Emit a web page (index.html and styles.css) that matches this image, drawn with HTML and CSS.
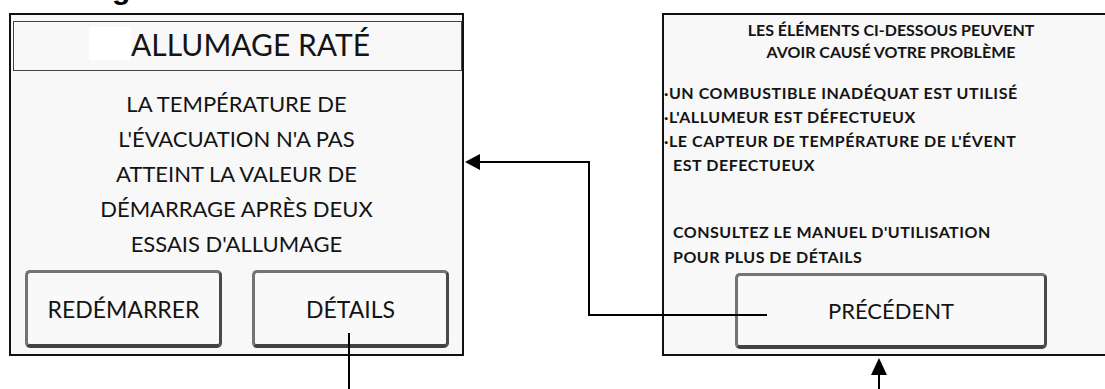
FILE: index.html
```html
<!DOCTYPE html>
<html lang="fr">
<head>
    <meta charset="UTF-8">
    <meta name="viewport" content="width=device-width, initial-scale=1.0">
    <title>Allumage raté</title>
    <link rel="stylesheet" href="styles.css">
</head>
<body>
    <div id="page-head">
        <div id="page-head-text">Allumage raté</div>
    </div>

    <div id="screens">
        <div class="screen" id="screen-error">
            <div id="error-title">
                <span id="title-blank"></span>
                <span>ALLUMAGE RATÉ</span>
            </div>

            <div id="error-text">
                LA TEMPÉRATURE DE<br>
                L'ÉVACUATION N'A PAS<br>
                ATTEINT LA VALEUR DE<br>
                DÉMARRAGE APRÈS DEUX<br>
                ESSAIS D'ALLUMAGE
            </div>

            <div id="error-buttons">
                <div class="screen-button">REDÉMARRER</div>
                <div class="screen-button">DÉTAILS</div>
            </div>
        </div>

        <div class="screen" id="screen-details">
            <div id="details-head">
                LES ÉLÉMENTS CI-DESSOUS PEUVENT<br>
                AVOIR CAUSÉ VOTRE PROBLÈME
            </div>

            <div id="details-list">
                ·UN COMBUSTIBLE INADÉQUAT EST UTILISÉ<br>
                ·L'ALLUMEUR EST DÉFECTUEUX<br>
                ·LE CAPTEUR DE TEMPÉRATURE DE L'ÉVENT<br>
                <span class="indent">EST DEFECTUEUX</span>
            </div>

            <div id="details-manual">
                CONSULTEZ LE MANUEL D'UTILISATION<br>
                POUR PLUS DE DÉTAILS
            </div>

            <div class="screen-button" id="back-button">PRÉCÉDENT</div>
        </div>
    </div>

    <!-- flow arrows between the two screens -->
    <svg id="arrows" width="1105" height="389" viewBox="0 0 1105 389">
        <polyline points="767,315 589,315 589,162 478,162" fill="none" stroke="#000" stroke-width="2"/>
        <polygon points="465,162 480,154 480,170" fill="#000"/>
        <line x1="349" y1="333" x2="349" y2="389" stroke="#000" stroke-width="2"/>
        <line x1="879" y1="372" x2="879" y2="389" stroke="#000" stroke-width="2"/>
        <polygon points="879,358 871,375 887,375" fill="#000"/>
    </svg>
</body>
</html>
```

FILE: styles.css
```css
body {
    margin: 0;
    width: 1105px;
    height: 389px;
    overflow: hidden;
    position: relative;
    background-color: #fff;
    font-family: Lato, "Open Sans", sans-serif;
    color: #141414;
}

#page-head {
    display: flow-root;
    height: 13px;
    padding-left: 12px;
}

#page-head-text {
    margin-top: -26px;
    font-family: "Liberation Sans", Arial, sans-serif;
    font-weight: bold;
    font-size: 30px;
    line-height: 30px;
    color: #000;
}

#screens {
    display: flex;
    gap: 198px;
    padding-left: 9px;
}

.screen {
    flex-shrink: 0;
    box-sizing: border-box;
    height: 343px;
    border: 2px solid #111;
    background-color: #f8f8f8;
    display: flex;
    flex-direction: column;
}

#screen-error {
    width: 455px;
}

#screen-details {
    width: 458px;
}

#error-title {
    display: flex;
    justify-content: center;
    height: 50px;
    box-sizing: border-box;
    margin: 6px 0 0 2px;
    padding-right: 16px;
    border: 1px solid #444;
    font-size: 30px;
    line-height: 44px;
}

#title-blank {
    width: 42px;
    height: 33px;
    margin-top: 5px;
    background-color: #fff;
}

#error-text {
    margin-top: 15px;
    text-align: center;
    font-size: 22px;
    line-height: 35px;
}

#error-buttons {
    display: flex;
    gap: 30px;
    margin: 9px 12px 0 14px;
}

.screen-button {
    display: flex;
    align-items: center;
    justify-content: center;
    box-sizing: border-box;
    width: 197px;
    height: 78px;
    border: 3px solid #747474;
    border-right-color: #4a4a4a;
    border-bottom: 4px solid #424242;
    border-radius: 5px;
    background-color: #f9f9f9;
    font-size: 23px;
}

#details-head {
    padding-top: 4px;
    text-align: center;
    font-weight: bold;
    font-size: 16px;
    line-height: 22px;
}

#details-list {
    margin-top: 18px;
    font-weight: bold;
    font-size: 16px;
    line-height: 24px;
    letter-spacing: 0.55px;
}

.indent {
    padding-left: 9px;
}

#details-manual {
    margin-top: 43px;
    padding-left: 9px;
    font-weight: bold;
    font-size: 16px;
    line-height: 24.5px;
    letter-spacing: 0.5px;
}

#back-button {
    width: 312px;
    height: 76px;
    margin: 4px auto 0 auto;
    font-size: 22px;
}

#arrows {
    position: absolute;
    top: 0;
    left: 0;
    pointer-events: none;
}
```
